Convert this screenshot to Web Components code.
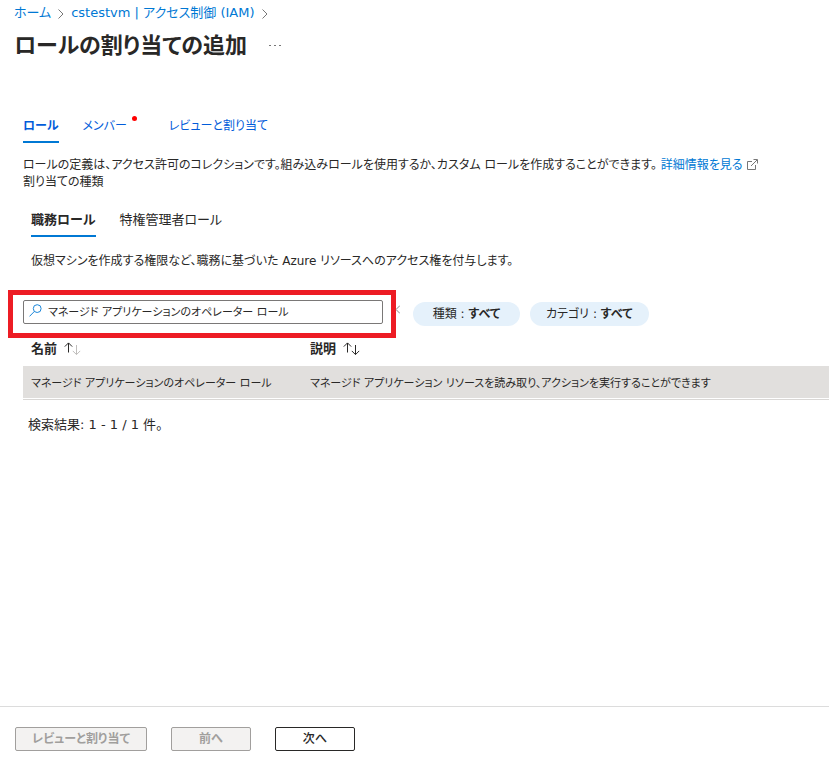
<!DOCTYPE html>
<html lang="ja">
<head>
<meta charset="utf-8">
<title>ロールの割り当ての追加</title>
<style>
  body {
    margin: 0;
    background: #fff;
    color: #292827;
    font: 13px/17px "DejaVu Sans", "Noto Sans CJK JP", sans-serif;
    font-feature-settings: "palt";
    --link: #0078d4;
    --tab: #015cda;
  }
</style>
</head>
<body>
<iam-page></iam-page>
<script>
const define = (name, html, setup) => {
  const template = document.createElement('template');
  template.innerHTML = html;
  customElements.define(name, class extends HTMLElement {
    constructor() {
      super();
      this.attachShadow({ mode: 'open' }).append(template.content.cloneNode(true));
    }
    connectedCallback() {
      if (setup) setup(this, this.shadowRoot);
    }
  });
};

define('iam-crumb', `
  <style>
    :host { display: flex; align-items: center; gap: 7px; }
    a { color: var(--link); text-decoration: none; white-space: nowrap; }
    svg { flex: none; margin-top: 2px; }
  </style>
  <a href="#"><slot></slot></a>
  <svg width="6" height="10" fill="none" stroke="#777" aria-hidden="true"><path d="M.5.5 5 5 .5 9.5"/></svg>
`);

define('iam-header', `
  <style>
    :host { display: block; padding: 4px 14px 0; }
    nav { display: flex; gap: 7px; line-height: 18px; }
    .title { display: flex; align-items: center; gap: 20px; margin-top: 6px; }
    h1 { margin: 0; font-size: 22px; line-height: 36px; font-weight: 700; white-space: nowrap; }
    button { display: flex; padding: 4px 2px; border: 0; background: none; }
  </style>
  <nav aria-label="階層"><slot name="crumbs"></slot></nav>
  <div class="title">
    <h1><slot></slot></h1>
    <button aria-label="その他"><svg width="12" height="2" fill="#777"><path d="M0 0h2v1H0zM5 0h2v1H5zM10 0h2v1h-2z"/></svg></button>
  </div>
`);

define('iam-tab', `
  <style>
    :host { display: block; }
    button {
      position: relative; padding: 0 0 6px; border: 0; border-bottom: 2px solid transparent;
      background: none; color: var(--tab-color, var(--tab)); font: inherit; line-height: 18px;
      font-feature-settings: inherit; white-space: nowrap;
    }
    :host([selected]) button { border-color: #0078d4; font-weight: 700; }
    i { display: none; }
    :host([required]) i {
      display: block; position: absolute; right: -10px; top: -1px;
      width: 5px; height: 5px; border-radius: 50%; background: #f00;
    }
  </style>
  <button role="tab"><slot></slot><i></i></button>
`, (el, root) => root.querySelector('button').setAttribute('aria-selected', el.hasAttribute('selected')));

define('iam-tabs', `
  <style>:host { display: flex; gap: 24px; }</style>
  <slot></slot>
`, el => el.setAttribute('role', 'tablist'));

define('iam-search', `
  <style>
    :host { display: block; position: relative; width: 360px; }
    label { display: flex; align-items: center; gap: 6px; box-sizing: border-box; height: 24px; padding: 0 5px; border: 1px solid #7a7877; border-radius: 2px; }
    svg { flex: none; }
    label svg { margin-bottom: 4px; }
    input { flex: 1; min-width: 0; padding: 0; border: 0; outline: 0; background: none; color: #292827; font: inherit; font-size: 11px; font-feature-settings: inherit; }
    .mark { position: absolute; inset: -10px -13px -14px -15px; border: 5px solid #ed1c24; pointer-events: none; }
    .clear { position: absolute; right: -17px; top: 5px; }
  </style>
  <label>
    <svg width="13" height="13" fill="none" stroke="#1a86d9" aria-hidden="true"><circle cx="8.2" cy="4.6" r="3.9"/><path d="M5.4 7.4.5 12.4"/></svg>
    <input type="text" aria-label="ロールの検索">
  </label>
  <svg class="clear" width="4" height="9" fill="none" stroke="#888" aria-hidden="true"><path d="M4 .5 0 4.5 4 8.5"/></svg>
  <div class="mark"></div>
`, (el, root) => { root.querySelector('input').value = el.getAttribute('value'); });

define('iam-pill', `
  <style>
    :host { display: block; }
    button { height: 24px; min-width: 107px; padding: 0 16px; border: 0; border-radius: 12px; background: #e5f1fb; color: #292827; font: inherit; font-size: 12px; font-feature-settings: inherit; white-space: nowrap; }
  </style>
  <button><slot name="label"></slot> : <b><slot></slot></b></button>
`);

define('iam-sort', `
  <style>
    :host { display: inline-block; margin-left: 2px; vertical-align: -3px; }
    svg { display: block; }
    :host([ascending]) .down { stroke: #c0bebc; }
  </style>
  <svg width="17" height="14" fill="none" stroke="#292827" aria-hidden="true">
    <path d="M4.5 10.5V1M.8 4.6 4.5.9l3.7 3.7"/>
    <path class="down" d="M12.5 3v9.5M8.8 8.9l3.7 3.7 3.7-3.7"/>
  </svg>
`);

define('iam-roles', `
  <style>
    :host { display: block; }
    table { width: 100%; table-layout: fixed; border-collapse: collapse; text-align: left; }
    th, td { padding: 0 8px; white-space: nowrap; }
    th { height: 32px; padding-bottom: 2px; font-size: 13px; }
    td { height: 30px; padding-top: 2px; font-size: 11px; }
    th:first-child { width: 263px; }
    tbody tr { background: #e1dfdd; box-shadow: 0 1px #fff, 0 2px #d9d7d5; }
  </style>
  <table>
    <thead><tr><th scope="col">名前 <iam-sort ascending></iam-sort></th><th scope="col">説明 <iam-sort></iam-sort></th></tr></thead>
    <tbody><tr><td><slot name="name"></slot></td><td><slot name="description"></slot></td></tr></tbody>
  </table>
`);

define('iam-button', `
  <style>
    :host { display: block; }
    button { height: 24px; min-width: 80px; padding: 0 16px; border: 1px solid #292827; border-radius: 2px; background: #fff; color: #292827; font: inherit; font-size: 12px; font-weight: 500; line-height: 20px; font-feature-settings: inherit; white-space: nowrap; }
    button:disabled { border-color: #a19f9d; background: #f3f2f1; color: #a19f9d; font-weight: 700; }
  </style>
  <button><slot></slot></button>
`, (el, root) => { root.querySelector('button').disabled = el.hasAttribute('disabled'); });

define('iam-footer', `
  <style>:host { display: flex; gap: 24px; padding: 20px 15px 10px; border-top: 1px solid #dcdcdc; }</style>
  <slot></slot>
`);

define('iam-page', `
  <style>
    :host { display: flex; flex-direction: column; min-height: 100vh; }
    main { flex: 1; padding: 53px 0 0 23px; }
    p { margin: 0; font-size: 12px; }
    .steps { font-size: 12px; }
    .review { margin-left: 18px; }
    .intro { margin-top: 14px; }
    a { color: var(--link); text-decoration: none; margin-left: 4px; white-space: nowrap; }
    a svg { margin-left: 4px; vertical-align: -1px; }
    .sub { --tab-color: #292827; margin: 20px 0 0 8px; }
    .hint { margin: 16px 0 0 8px; }
    .filters { display: flex; align-items: flex-end; gap: 10px; margin-top: 30px; }
    iam-search { margin-right: 20px; margin-bottom: 2px; }
    iam-roles { margin-top: 6px; }
    .count { margin: 18px 0 0 5px; font-size: 13px; }
  </style>
  <iam-header>
    <iam-crumb slot="crumbs">ホーム</iam-crumb>
    <iam-crumb slot="crumbs">cstestvm | アクセス制御 (IAM)</iam-crumb>
    ロールの割り当ての追加
  </iam-header>
  <main>
    <iam-tabs class="steps">
      <iam-tab selected>ロール</iam-tab>
      <iam-tab required>メンバー</iam-tab>
      <iam-tab class="review">レビューと割り当て</iam-tab>
    </iam-tabs>
    <p class="intro">ロールの定義は、アクセス許可のコレクションです。組み込みロールを使用するか、カスタム ロールを作成することができます。<a href="#">詳細情報を見る<svg width="11" height="11" fill="none" stroke="#777" aria-hidden="true"><path d="M5 2.5H.5v8h8V6M4 7l6-6M6.5.5h4v4"/></svg></a></p>
    <p>割り当ての種類</p>
    <iam-tabs class="sub">
      <iam-tab selected>職務ロール</iam-tab>
      <iam-tab>特権管理者ロール</iam-tab>
    </iam-tabs>
    <p class="hint">仮想マシンを作成する権限など、職務に基づいた Azure リソースへのアクセス権を付与します。</p>
    <div class="filters">
      <iam-search value="マネージド アプリケーションのオペレーター ロール"></iam-search>
      <iam-pill><span slot="label">種類</span>すべて</iam-pill>
      <iam-pill><span slot="label">カテゴリ</span>すべて</iam-pill>
    </div>
    <iam-roles>
      <span slot="name">マネージド アプリケーションのオペレーター ロール</span>
      <span slot="description">マネージド アプリケーション リソースを読み取り、アクションを実行することができます</span>
    </iam-roles>
    <p class="count">検索結果: 1 - 1 / 1 件。</p>
  </main>
  <iam-footer>
    <iam-button disabled>レビューと割り当て</iam-button>
    <iam-button disabled>前へ</iam-button>
    <iam-button>次へ</iam-button>
  </iam-footer>
`);
</script>
</body>
</html>
